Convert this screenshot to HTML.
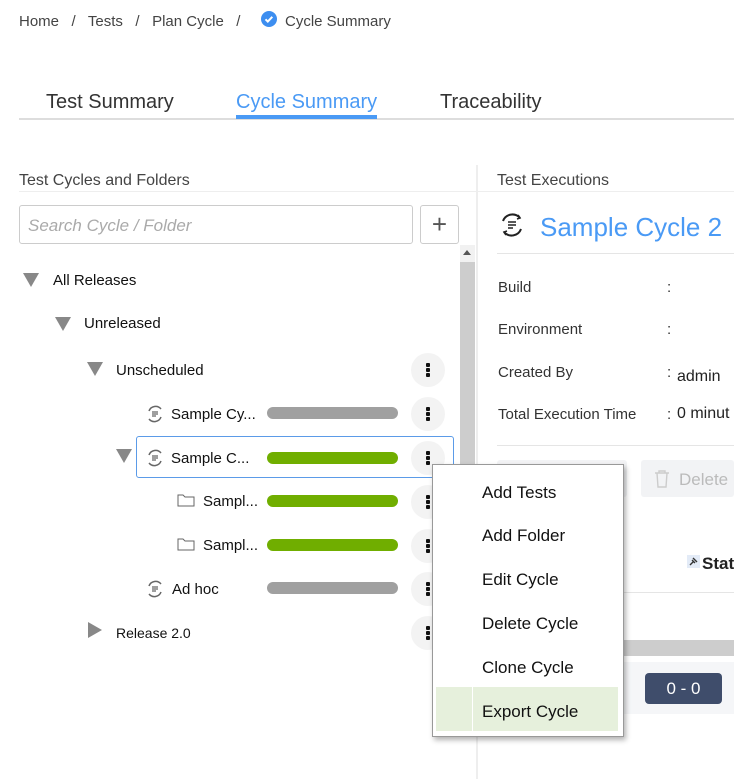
<!DOCTYPE html><html><head><style>
body{margin:0;width:734px;height:779px;overflow:hidden;background:#fff;font-family:"Liberation Sans",sans-serif;color:#333;position:relative}
.a{position:absolute;white-space:nowrap}
.bar{position:absolute;left:267px;width:131px;height:12px;border-radius:6px}
.keb{position:absolute;left:411px;width:34px;height:34px;border-radius:50%;background:#f3f3f3}
.keb i{position:absolute;left:15px;width:4px;height:4px;border-radius:1px;background:#111}
.tri{position:absolute;width:0;height:0;border-left:8px solid transparent;border-right:8px solid transparent;border-top:14px solid #888}
.mi{position:absolute;left:482px;font-size:17px;color:#111}
</style></head><body>
<div class="a" style="left:19px;top:13px;font-size:15px;color:#444">Home &nbsp;&nbsp;/&nbsp;&nbsp; Tests &nbsp;&nbsp;/&nbsp;&nbsp; Plan Cycle &nbsp;&nbsp;/</div>
<svg class="a" style="left:261px;top:11px" width="16" height="16"><circle cx="8" cy="8" r="8" fill="#3d8ef0"/><path d="M4.5 8.3l2.3 2.3 4.5-4.8" stroke="#fff" stroke-width="2" fill="none"/></svg>
<div class="a" style="left:285px;top:13px;font-size:15px;color:#444">Cycle Summary</div>
<div class="a" style="left:19px;top:118px;width:715px;height:2px;background:#ddd"></div>
<div class="a" style="left:46px;top:91px;font-size:20px;color:#333">Test Summary</div>
<div class="a" style="left:236px;top:91px;font-size:20px;color:#4a9af5">Cycle Summary</div>
<div class="a" style="left:236px;top:115px;width:141px;height:4px;background:#4a9af5"></div>
<div class="a" style="left:440px;top:91px;font-size:20px;color:#333">Traceability</div>
<div class="a" style="left:19px;top:172px;font-size:16px;color:#444">Test Cycles and Folders</div>
<div class="a" style="left:19px;top:191px;width:457px;height:1px;background:#eee"></div>
<div class="a" style="left:476px;top:165px;width:2px;height:614px;background:#eee"></div>
<div class="a" style="left:19px;top:205px;width:392px;height:37px;border:1px solid #ccc;border-radius:3px"></div>
<div class="a" style="left:28px;top:216px;font-size:17px;font-style:italic;color:#aaa">Search Cycle / Folder</div>
<div class="a" style="left:420px;top:205px;width:37px;height:37px;border:1px solid #ccc;border-radius:3px;font-size:26px;text-align:center;line-height:36px;color:#555">+</div>
<div class="a" style="left:460px;top:245px;width:15px;height:415px;background:#f1f1f1"></div>
<div class="a" style="left:460px;top:262px;width:15px;height:398px;background:#cdcdcd"></div>
<div class="a" style="left:463px;top:250px;width:0;height:0;border-left:4px solid transparent;border-right:4px solid transparent;border-bottom:5px solid #555"></div>
<div class="tri" style="left:23px;top:273px"></div><div class="a" style="left:53px;top:272px;font-size:15px;color:#111">All Releases</div>
<div class="tri" style="left:55px;top:317px"></div><div class="a" style="left:84px;top:315px;font-size:15px;color:#111">Unreleased</div>
<div class="tri" style="left:87px;top:362px"></div><div class="a" style="left:116px;top:362px;font-size:15px;color:#111">Unscheduled</div>
<div class="a" style="left:136px;top:436px;width:316px;height:40px;border:1px solid #5b9be8;border-radius:3px"></div>
<div class="tri" style="left:116px;top:449px"></div>
<svg class="a" style="left:146px;top:405px" width="18" height="18"><path d="M3 6a7 7 0 0 1 12-2M15 12a7 7 0 0 1-12 2" stroke="#666" stroke-width="1.5" fill="none"/><path d="M6 7h6M6 9h6M6 11h4" stroke="#666" stroke-width="1.2"/></svg>
<div class="a" style="left:171px;top:406px;font-size:15px;color:#111">Sample Cy...</div>
<svg class="a" style="left:146px;top:449px" width="18" height="18"><path d="M3 6a7 7 0 0 1 12-2M15 12a7 7 0 0 1-12 2" stroke="#666" stroke-width="1.5" fill="none"/><path d="M6 7h6M6 9h6M6 11h4" stroke="#666" stroke-width="1.2"/></svg>
<div class="a" style="left:171px;top:450px;font-size:15px;color:#111">Sample C...</div>
<svg class="a" style="left:177px;top:493px" width="18" height="14"><path d="M1 2h5l2 2h9v9H1z" stroke="#666" fill="none"/></svg>
<div class="a" style="left:203px;top:493px;font-size:15px;color:#111">Sampl...</div>
<svg class="a" style="left:177px;top:537px" width="18" height="14"><path d="M1 2h5l2 2h9v9H1z" stroke="#666" fill="none"/></svg>
<div class="a" style="left:203px;top:537px;font-size:15px;color:#111">Sampl...</div>
<svg class="a" style="left:146px;top:580px" width="18" height="18"><path d="M3 6a7 7 0 0 1 12-2M15 12a7 7 0 0 1-12 2" stroke="#666" stroke-width="1.5" fill="none"/><path d="M6 7h6M6 9h6M6 11h4" stroke="#666" stroke-width="1.2"/></svg>
<div class="a" style="left:172px;top:581px;font-size:15px;color:#111">Ad hoc</div>
<div class="a" style="left:88px;top:622px;width:0;height:0;border-top:8px solid transparent;border-bottom:8px solid transparent;border-left:14px solid #888"></div>
<div class="a" style="left:116px;top:625px;font-size:14px;color:#111">Release 2.0</div>
<div class="bar" style="top:407px;background:#a0a0a0"></div>
<div class="bar" style="top:452px;background:#70ae00"></div>
<div class="bar" style="top:495px;background:#70ae00"></div>
<div class="bar" style="top:539px;background:#70ae00"></div>
<div class="bar" style="top:582px;background:#a0a0a0"></div>
<div class="keb" style="top:353px"><i style="top:10px"></i><i style="top:15px"></i><i style="top:20px"></i></div>
<div class="keb" style="top:397px"><i style="top:10px"></i><i style="top:15px"></i><i style="top:20px"></i></div>
<div class="keb" style="top:441px"><i style="top:10px"></i><i style="top:15px"></i><i style="top:20px"></i></div>
<div class="keb" style="top:485px"><i style="top:10px"></i><i style="top:15px"></i><i style="top:20px"></i></div>
<div class="keb" style="top:529px"><i style="top:10px"></i><i style="top:15px"></i><i style="top:20px"></i></div>
<div class="keb" style="top:572px"><i style="top:10px"></i><i style="top:15px"></i><i style="top:20px"></i></div>
<div class="keb" style="top:616px"><i style="top:10px"></i><i style="top:15px"></i><i style="top:20px"></i></div>
<div class="a" style="left:497px;top:172px;font-size:16px;color:#444">Test Executions</div>
<div class="a" style="left:478px;top:191px;width:256px;height:1px;background:#eee"></div>
<svg class="a" style="left:499px;top:212px" width="26" height="26"><path d="M4 9a10 10 0 0 1 17-3M22 17a10 10 0 0 1-17 3" stroke="#222" stroke-width="2" fill="none"/><path d="M19 3l2 3-3 1M7 23l-2-3 3-1" stroke="#222" stroke-width="1.6" fill="none"/><path d="M9 10h8M9 13h8M9 16h5" stroke="#222" stroke-width="1.6"/></svg>
<div class="a" style="left:540px;top:212px;font-size:26px;color:#4a9af5">Sample Cycle 2</div>
<div class="a" style="left:497px;top:253px;width:237px;height:1px;background:#e5e5e5"></div>
<div class="a" style="left:498px;top:279px;font-size:15px;color:#333">Build</div>
<div class="a" style="left:498px;top:321px;font-size:15px;color:#333">Environment</div>
<div class="a" style="left:498px;top:364px;font-size:15px;color:#333">Created By</div>
<div class="a" style="left:498px;top:406px;font-size:15px;color:#333">Total Execution Time</div>
<div class="a" style="left:667px;top:279px;font-size:15px">:</div>
<div class="a" style="left:667px;top:321px;font-size:15px">:</div>
<div class="a" style="left:667px;top:364px;font-size:15px">:</div>
<div class="a" style="left:667px;top:406px;font-size:15px">:</div>
<div class="a" style="left:677px;top:368px;font-size:16px;color:#222">admin</div>
<div class="a" style="left:677px;top:405px;font-size:16px;color:#222">0 minut</div>
<div class="a" style="left:497px;top:445px;width:237px;height:1px;background:#e5e5e5"></div>
<div class="a" style="left:497px;top:460px;width:130px;height:37px;background:#f2f3f5;border-radius:3px"></div>
<div class="a" style="left:641px;top:460px;width:93px;height:37px;background:#f2f3f5;border-radius:3px"></div>
<svg class="a" style="left:654px;top:469px" width="16" height="19"><path d="M1 4h14M5 4V2h6v2M3 4l1 14h8l1-14" stroke="#ccc" stroke-width="1.4" fill="none"/></svg>
<div class="a" style="left:679px;top:470px;font-size:17px;color:#bbb">Delete</div>
<div class="a" style="left:687px;top:555px;width:13px;height:13px;background:#e3ebf7"></div>
<svg class="a" style="left:688px;top:556px" width="11" height="11"><path d="M2 9l4-4M5 2l4 4M4 4l3 3" stroke="#333" stroke-width="1.4"/></svg>
<div class="a" style="left:702px;top:554px;font-size:17px;font-weight:bold;color:#222">Stat</div>
<div class="a" style="left:478px;top:592px;width:256px;height:1px;background:#e5e5e5"></div>
<div class="a" style="left:478px;top:640px;width:256px;height:16px;background:#cdcdcd"></div>
<div class="a" style="left:478px;top:662px;width:256px;height:52px;background:#f5f6f8"></div>
<div class="a" style="left:645px;top:673px;width:77px;height:31px;background:#3f4d6b;border-radius:4px;color:#fff;font-size:17px;text-align:center;line-height:31px">0 - 0</div>
<div class="a" style="left:432px;top:464px;width:190px;height:271px;background:#fff;border:1px solid #999;box-shadow:2px 3px 5px rgba(0,0,0,.3)"></div>
<div class="a" style="left:436px;top:687px;width:182px;height:44px;background:#e6f0dc"></div>
<div class="a" style="left:472px;top:687px;width:1px;height:44px;background:#fff"></div>
<div class="mi" style="top:483px">Add Tests</div>
<div class="mi" style="top:526px">Add Folder</div>
<div class="mi" style="top:570px">Edit Cycle</div>
<div class="mi" style="top:614px">Delete Cycle</div>
<div class="mi" style="top:658px">Clone Cycle</div>
<div class="mi" style="top:702px">Export Cycle</div>
</body></html>
